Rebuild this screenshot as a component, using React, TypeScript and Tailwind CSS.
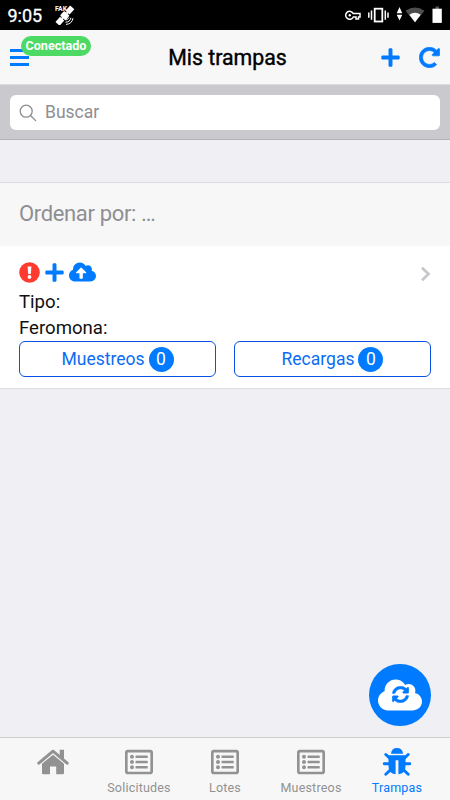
import React from 'react';
import { FaCloud, FaCloudUploadAlt, FaPlus, FaRedoAlt, FaRegListAlt, FaSyncAlt } from 'react-icons/fa';

const HomeIcon: React.FC<{ className?: string }> = ({ className }) => (
  <svg className={className} viewBox="0 0 32 28" fill="currentColor">
    <path d="M1.8 15.2 L16 3.2 L30.2 15.2" fill="none" stroke="currentColor" strokeWidth="3" strokeLinecap="round" strokeLinejoin="round" />
    <path d="M22.7 1.8 H27 V12 L22.7 8.5 Z" />
    <path d="M5 15.8 L16 6.8 L27 15.8 V25 Q27 26.2 25.8 26.2 H19.2 V18.5 H13 V26.2 H6.2 Q5 26.2 5 25 Z" />
  </svg>
);

const BugIcon: React.FC<{ className?: string }> = ({ className }) => (
  <svg className={className} viewBox="0 0 32 28" fill="currentColor">
    <path d="M10 5.8 Q10.5 0 16 0 Q21.5 0 22 5.8 Z" />
    <path d="M7.5 7.3 H24.5 V18 Q24.5 25.7 17.4 26.3 V12.3 H14.6 V26.3 Q7.5 25.7 7.5 18 Z" />
    <path
      d="M4.8 6.5 L9 10.5 M27.2 6.5 L23 10.5 M3.2 15.7 H8 M24 15.7 H28.8 M4.8 26.3 L10 21.3 M27.2 26.3 L22 21.3"
      fill="none"
      stroke="currentColor"
      strokeWidth="2.9"
      strokeLinecap="round"
    />
  </svg>
);

const AlertIcon: React.FC = () => (
  <svg className="h-[21px] w-[21px]" viewBox="0 0 21 21">
    <circle cx="10.5" cy="10.5" r="10.3" fill="#ff3b30" />
    <path d="M8.6 4.5 H12.4 L11.8 12 H9.2 Z" fill="white" />
    <circle cx="10.5" cy="14.9" r="1.9" fill="white" />
  </svg>
);

const StatusBar: React.FC = () => (
  <div className="flex h-[30px] shrink-0 items-center justify-between bg-black pl-[7.5px] pr-[8.5px] text-white">
    <div className="flex items-center gap-[13px]">
      <span className="pt-px text-[18px] leading-[30px] [-webkit-text-stroke:0.3px_white]">9:05</span>
      <svg className="h-[20px] w-[20px]" viewBox="0 0 20 20" fill="currentColor">
        <text x="0" y="6.3" fontSize="6.8" fontWeight="bold">FAK</text>
        <g transform="translate(0.3 0.6) rotate(-48 9.5 10)">
          <rect x="-1.5" y="7.3" width="7" height="5.6" />
          <rect x="5" y="9" width="9" height="2" />
          <rect x="6.3" y="6.4" width="6.4" height="7.2" rx="1" />
          <rect x="13.5" y="7.3" width="7" height="5.6" />
        </g>
        <path d="M10.5 15 A4 4 0 0 0 14 12.5 M10.5 17.2 A5.8 5.8 0 0 0 16 12.8 M11 19.4 A7.6 7.6 0 0 0 18 13.2" fill="none" stroke="currentColor" strokeWidth="1" />
      </svg>
    </div>
    <svg className="h-[18px] w-[98px]" viewBox="0 0 98 18" fill="none" stroke="currentColor">
      <path d="M9.3 7.6 H16 V11 H14.5 V13 H12 V11 H9.3 A4 4 0 1 1 9.3 7.6 Z" strokeWidth="1.5" />
      <circle cx="5.8" cy="9.3" r="1.2" fill="currentColor" stroke="none" />
      <rect x="30.7" y="2.7" width="7.6" height="12.8" strokeWidth="1.8" />
      <path d="M27.5 4.5 V13.8 M24.8 6.5 V11.7 M41.3 4.5 V13.8 M44 6.5 V11.7" strokeWidth="1.5" />
      <path d="M52.7 7.3 L55.5 1 L58.3 7.3 Z M52.7 8.7 L55.5 14.5 L58.3 8.7 Z" fill="currentColor" stroke="none" />
      <path d="M61.5 4.8 Q71 -1.8 80.5 4.8 L71 16.5 Z" fill="#4d4d4d" stroke="none" />
      <path d="M65.3 8.7 Q71 4.8 76.7 8.7 L71 16.2 Z" fill="currentColor" stroke="none" />
      <path d="M91.5 0.5 H95 V3 H91.5 Z" fill="#555" stroke="none" />
      <rect x="88.5" y="2.7" width="9.3" height="14.2" fill="currentColor" stroke="none" />
    </svg>
  </div>
);

const Header: React.FC = () => (
  <header className="relative flex h-[55px] shrink-0 items-center border-b border-[#dcdcde] bg-[#f7f7f7] px-[10px]">
    <button className="flex w-[60px] flex-col gap-[4px] pt-[1px]" aria-label="Menu">
      <span className="h-[3px] w-[19px] bg-[#007aff]" />
      <span className="h-[3px] w-[19px] bg-[#007aff]" />
      <span className="h-[3px] w-[19px] bg-[#007aff]" />
    </button>
    <span className="absolute top-[6px] left-[21px] h-[20px] w-[70px] rounded-full bg-[#4cd964] text-center text-[12.6px] leading-[20px] font-bold text-white">
      Conectado
    </span>
    <h1 className="flex-1 pt-px pl-[5px] text-center text-[21.3px] text-black [-webkit-text-stroke:0.4px_black]">
      Mis trampas
    </h1>
    <div className="flex w-[60px] items-center justify-end gap-[18px] text-[#007aff]">
      <FaPlus className="h-[21px] w-[21px] shrink-0" />
      <FaRedoAlt className="h-[21px] w-[21px] shrink-0" strokeWidth={16} />
    </div>
  </header>
);

const SearchBar: React.FC = () => (
  <div className="h-[55px] shrink-0 border-b border-[#b4b4b9] bg-[#c9c9ce] px-[10px] pt-[10px]">
    <div className="flex h-[35px] items-center rounded-[6px] bg-white pl-[9px] text-[#8e8e93]">
      <svg className="h-[18px] w-[18px]" viewBox="0 0 18 18" fill="none" stroke="currentColor" strokeWidth="1.3">
        <circle cx="7.2" cy="7.2" r="6" />
        <path d="M11.5 11.5 L17 17" />
      </svg>
      <span className="ml-[8px] text-[17.5px]">Buscar</span>
    </div>
  </div>
);

const CountButton: React.FC<{ label: string; count: number }> = ({ label, count }) => (
  <button className="flex h-[36px] w-[197px] items-center justify-center gap-[4px] rounded-[6px] border border-[#0a50e6] text-[17.5px] text-[#0a6cf5]">
    {label}
    <span className="h-[25px] w-[25px] rounded-full bg-[#007aff] text-center text-[17.5px] leading-[25px] text-white">
      {count}
    </span>
  </button>
);

const TrapItem: React.FC = () => (
  <div className="h-[143px] border-b border-[#dcdce1] bg-white px-[19px] pt-[14px]">
    <div className="flex h-[24px] items-center">
      <AlertIcon />
      <FaPlus className="ml-[4px] h-[21px] w-[21px] text-[#007aff]" />
      <FaCloudUploadAlt className="ml-[4px] h-[22px] w-[27px] text-[#007aff]" />
      <svg className="ml-auto h-[22px] w-[11px]" viewBox="0 0 11 22" fill="none" stroke="#c7c7cc" strokeWidth="2.8">
        <path d="M2 6.8 L8.5 13 L2 19.2" />
      </svg>
    </div>
    <p className="pt-[5px] text-[18.6px] leading-[26px] text-[#111]">Tipo:</p>
    <p className="text-[18.6px] leading-[26px] text-[#111]">Feromona:</p>
    <div className="flex justify-between">
      <CountButton label="Muestreos" count={0} />
      <CountButton label="Recargas" count={0} />
    </div>
  </div>
);

const tabs = [
  { label: '', Icon: HomeIcon },
  { label: 'Solicitudes', Icon: FaRegListAlt },
  { label: 'Lotes', Icon: FaRegListAlt },
  { label: 'Muestreos', Icon: FaRegListAlt },
  { label: 'Trampas', Icon: BugIcon, active: true },
];

const TabBar: React.FC = () => (
  <nav className="flex h-[63px] shrink-0 border-t border-[#cececf] bg-[#f7f7f7] px-[10px]">
    {tabs.map(({ label, Icon, active }, i) => (
      <div
        key={i}
        className={`flex flex-1 flex-col items-center pt-[10px] text-[12.5px] leading-[20px] tracking-[0.2px] ${active ? 'text-[#007aff]' : 'text-[#929292]'}`}
      >
        <Icon className="h-[28px] w-[32px]" />
        <span className="pt-[2px]">{label}</span>
      </div>
    ))}
  </nav>
);

const App: React.FC = () => {
  return (
    <div className="relative flex h-[800px] w-[450px] flex-col overflow-hidden bg-[#efeff4] font-[Roboto,sans-serif]">
      <StatusBar />
      <Header />
      <SearchBar />
      <main className="flex-1 pt-[42px]">
        <div className="h-[64px] border-t border-[#dcdce1] bg-[#f7f7f7] pl-[19px] text-[22px] leading-[62px] tracking-[-0.35px] text-[#8e8e93]">
          Ordenar por: …
        </div>
        <TrapItem />
      </main>
      <button
        className="absolute top-[664px] left-[369px] flex h-[62px] w-[62px] items-center justify-center rounded-full bg-[#007aff]"
        aria-label="Sincronizar"
      >
        <FaCloud className="h-[44px] w-[44px] text-white" />
        <FaSyncAlt className="absolute top-[22px] left-[22.5px] h-[17px] w-[17px] text-[#007aff]" strokeWidth={14} />
      </button>
      <TabBar />
    </div>
  );
};

export default App;
